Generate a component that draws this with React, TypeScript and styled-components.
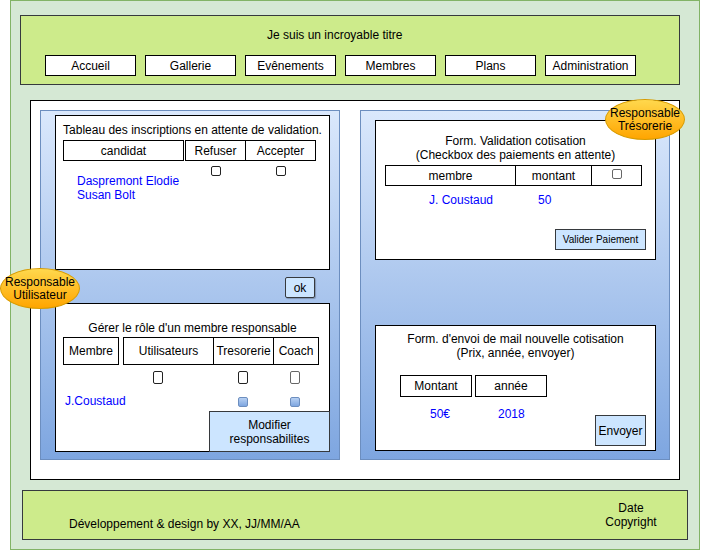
import styled, { createGlobalStyle } from "styled-components"

const GlobalStyle = createGlobalStyle`
  body {
    margin: 0;
    background: #fff;
    font-family: "Liberation Sans", Arial, Helvetica, sans-serif;
    font-size: 12px;
    color: #000;
  }
`

const Page = styled.div`
  position: relative;
  width: 701px;
  height: 552px;
  box-sizing: border-box;
  padding-left: 10px;
`
const Frame = styled.div`
  width: 690px;
  height: 550px;
  box-sizing: border-box;
  border: 1px solid #82b366;
  background: #d5e8d4;
  display: flex;
  flex-direction: column;
`
const Header = styled.header`
  margin: 14px 0 0 9px;
  width: 660px;
  height: 70px;
  box-sizing: border-box;
  border: 1px solid #36393d;
  background: #cdeb8b;
  padding: 12px 0 0 24px;
`
const SiteTitle = styled.div`
  line-height: 14px;
  padding-left: 222px;
`
const Nav = styled.nav`
  display: flex;
  gap: 9px;
  margin-top: 13px;
`
const NavButton = styled.div`
  width: 91px;
  height: 21px;
  box-sizing: border-box;
  border: 1px solid #000;
  background: #fff;
  display: flex;
  align-items: center;
  justify-content: center;
`
const Main = styled.main`
  margin: 15px 0 0 19px;
  width: 650px;
  height: 380px;
  box-sizing: border-box;
  border: 1px solid #000;
  background: #fff;
  padding: 9px 0 0 9px;
  display: flex;
  gap: 20px;
`
const Panel = styled.section<{ $w: number; $pt: number }>`
  position: relative;
  width: ${p => p.$w}px;
  height: 350px;
  box-sizing: border-box;
  border: 1px solid #6c8ebf;
  background: linear-gradient(#dae8fc, #7ea6e0);
  padding: ${p => p.$pt}px 0 0 14px;
  display: flex;
  flex-direction: column;
`
const Form = styled.div<{ $w: number; $h: number; $pt: number; $mt?: number }>`
  width: ${p => p.$w}px;
  height: ${p => p.$h}px;
  margin-top: ${p => p.$mt ?? 0}px;
  box-sizing: border-box;
  border: 1px solid #000;
  background: #fff;
  padding-top: ${p => p.$pt}px;
  display: flex;
  flex-direction: column;
`
const FormTitle = styled.div`
  text-align: center;
  line-height: 14px;
`
const Row = styled.div<{ $mt?: number; $pl?: number }>`
  display: flex;
  align-items: flex-start;
  margin-top: ${p => p.$mt ?? 0}px;
  padding-left: ${p => p.$pl ?? 0}px;
`
const Cell = styled.div<{ $w: number; $h: number; $ml?: number; $join?: boolean }>`
  width: ${p => p.$w}px;
  height: ${p => p.$h}px;
  margin-left: ${p => p.$ml ?? 0}px;
  box-sizing: border-box;
  border: 1px solid #000;
  ${p => (p.$join ? "border-left: none;" : "")}
  display: flex;
  align-items: center;
  justify-content: center;
`
const Col = styled.div<{ $w: number }>`
  width: ${p => p.$w}px;
  display: flex;
  justify-content: center;
`
const Names = styled.div`
  width: 122px;
  box-sizing: border-box;
  padding: 8px 0 0 14px;
  line-height: 14px;
  color: #0000ff;
`
const Value = styled.div<{ $w?: number; $pl?: number }>`
  ${p => (p.$w ? `width: ${p.$w}px;` : "")}
  box-sizing: border-box;
  padding-left: ${p => p.$pl ?? 0}px;
  line-height: 14px;
  color: #0000ff;
`
const Check = styled.div<{ $h?: number; $ml?: number; $mt?: number; $filled?: boolean; $grey?: boolean }>`
  width: 10px;
  height: ${p => p.$h ?? 10}px;
  margin-left: ${p => p.$ml ?? 0}px;
  margin-top: ${p => p.$mt ?? 0}px;
  box-sizing: border-box;
  border-radius: 2px;
  border: ${p => (p.$grey ? "1.5px solid #666" : p.$filled ? "1px solid #6c8ebf" : "1px solid #222")};
  background: ${p => (p.$filled ? "linear-gradient(#b7d0f2, #7ea6e0)" : "#fff")};
`
const ActionButton = styled.div<{ $w: number; $h: number; $size?: number }>`
  width: ${p => p.$w}px;
  height: ${p => p.$h}px;
  box-sizing: border-box;
  border: 1px solid #36393d;
  background: #cce5ff;
  font-size: ${p => p.$size ?? 12}px;
  line-height: 14px;
  text-align: center;
  display: flex;
  align-items: center;
  justify-content: center;
`
const OkButton = styled(ActionButton)`
  align-self: flex-end;
  margin: 7px 24px 0 0;
  border-radius: 2px;
  box-shadow: 1px 1px 1px rgba(0, 0, 0, 0.25);
`
const CornerButton = styled(ActionButton)`
  align-self: flex-end;
  margin: auto -1px -1px 0;
`
const PayButton = styled(ActionButton)`
  align-self: flex-end;
  margin: auto 9px 9px 0;
`
const SendButton = styled(ActionButton)`
  margin: 8px 9px 0 auto;
`
const Badge = styled.div<{ $left: number; $top: number }>`
  position: absolute;
  left: ${p => p.$left}px;
  top: ${p => p.$top}px;
  z-index: 2;
  width: 80px;
  height: 41px;
  box-sizing: border-box;
  border-radius: 50%;
  border: 1px solid #d79b00;
  background: linear-gradient(#ffd84d, #ffa500);
  display: flex;
  flex-direction: column;
  align-items: center;
  justify-content: center;
  line-height: 13px;
`
const Footer = styled.footer`
  margin: 10px 0 0 11px;
  width: 666px;
  height: 50px;
  box-sizing: border-box;
  border: 1px solid #36393d;
  background: #cdeb8b;
  padding: 0 26px 0 46px;
  display: flex;
  justify-content: space-between;
  align-items: center;
`
const Credits = styled.div`
  align-self: flex-end;
  margin-bottom: 8px;
  line-height: 14px;
`
const Copyright = styled.div`
  width: 60px;
  text-align: center;
  line-height: 14px;
`

const navItems = ["Accueil", "Gallerie", "Evênements", "Membres", "Plans", "Administration"]

export default function App() {
  return (
    <Page>
      <GlobalStyle />
      <Frame>
        <Header>
          <SiteTitle>Je suis un incroyable titre</SiteTitle>
          <Nav>
            {navItems.map(n => (
              <NavButton key={n}>{n}</NavButton>
            ))}
          </Nav>
        </Header>

        <Main>
          <Panel $w={300} $pt={4}>
            <Badge $left={-41} $top={157}>
              <span>Responsable</span>
              <span>Utilisateur</span>
            </Badge>
            <Form $w={275} $h={155} $pt={7}>
              <FormTitle>Tableau des inscriptions en attente de validation.</FormTitle>
              <Row $mt={3} $pl={7}>
                <Cell $w={121} $h={21}>candidat</Cell>
                <Cell $w={61} $h={21} $ml={1}>Refuser</Cell>
                <Cell $w={70} $h={21} $join>Accepter</Cell>
              </Row>
              <Row $mt={5} $pl={7}>
                <Names>
                  <div>Daspremont Elodie</div>
                  <div>Susan Bolt</div>
                </Names>
                <Col $w={61}><Check /></Col>
                <Col $w={70}><Check /></Col>
              </Row>
            </Form>
            <OkButton $w={30} $h={21}>ok</OkButton>
            <Form $w={275} $h={149} $pt={17} $mt={5}>
              <FormTitle>Gérer le rôle d'un membre responsable</FormTitle>
              <Row $mt={2} $pl={7}>
                <Cell $w={56} $h={28}>Membre</Cell>
                <Cell $w={91} $h={28} $ml={4}>Utilisateurs</Cell>
                <Cell $w={60} $h={28} $join>Tresorerie</Cell>
                <Cell $w={45} $h={28} $join>Coach</Cell>
              </Row>
              <Row $mt={6} $pl={97}>
                <Check $h={13} />
                <Check $h={13} $ml={75} />
                <Check $h={13} $ml={42} $grey />
              </Row>
              <Row $mt={10}>
                <Value $w={182} $pl={9}>J.Coustaud</Value>
                <Check $filled $mt={3} />
                <Check $filled $mt={3} $ml={42} />
              </Row>
              <CornerButton $w={121} $h={41}>
                Modifier
                <br />
                responsabilites
              </CornerButton>
            </Form>
          </Panel>

          <Panel $w={310} $pt={9}>
            <Badge $left={244} $top={-12}>
              <span>Responsable</span>
              <span>Trésorerie</span>
            </Badge>
            <Form $w={281} $h={140} $pt={13}>
              <FormTitle>
                Form. Validation cotisation
                <br />
                (Checkbox des paiements en attente)
              </FormTitle>
              <Row $mt={3} $pl={9}>
                <Cell $w={131} $h={21}>membre</Cell>
                <Cell $w={76} $h={21} $join>montant</Cell>
                <Cell $w={50} $h={21} $join>
                  <Check $grey $mt={-3} />
                </Cell>
              </Row>
              <Row $mt={7}>
                <Value $w={162} $pl={53}>J. Coustaud</Value>
                <Value>50</Value>
              </Row>
              <PayButton $w={91} $h={21} $size={10}>Valider Paiement</PayButton>
            </Form>
            <Form $w={281} $h={126} $pt={6} $mt={65}>
              <FormTitle>
                Form. d'envoi de mail nouvelle cotisation
                <br />
                (Prix, année, envoyer)
              </FormTitle>
              <Row $mt={15} $pl={24}>
                <Cell $w={72} $h={22}>Montant</Cell>
                <Cell $w={72} $h={22} $ml={3}>année</Cell>
              </Row>
              <Row $mt={10}>
                <Value $w={122} $pl={54}>50€</Value>
                <Value>2018</Value>
                <SendButton $w={51} $h={31}>Envoyer</SendButton>
              </Row>
            </Form>
          </Panel>
        </Main>

        <Footer>
          <Credits>Développement &amp; design by XX, JJ/MM/AA</Credits>
          <Copyright>
            Date
            <br />
            Copyright
          </Copyright>
        </Footer>
      </Frame>
    </Page>
  )
}
